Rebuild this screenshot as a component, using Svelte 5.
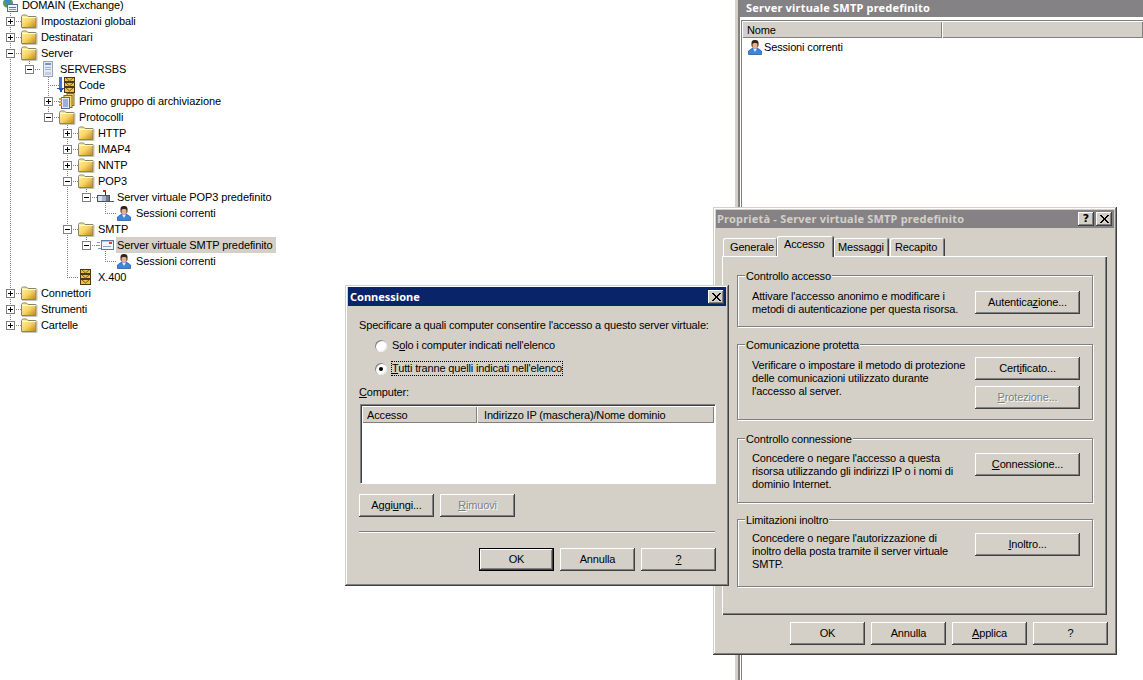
<script>
  const rows = [
    { t: 'DOMAIN (Exchange)', l: 0, i: 'domain' },
    { t: 'Impostazioni globali', l: 1, b: '+', i: 'folder' },
    { t: 'Destinatari', l: 1, b: '+', i: 'folder' },
    { t: 'Server', l: 1, b: '-', i: 'folder' },
    { t: 'SERVERSBS', l: 2, b: '-', i: 'server' },
    { t: 'Code', l: 3, i: 'queue' },
    { t: 'Primo gruppo di archiviazione', l: 3, b: '+', i: 'store' },
    { t: 'Protocolli', l: 3, b: '-', i: 'folder' },
    { t: 'HTTP', l: 4, b: '+', i: 'folder' },
    { t: 'IMAP4', l: 4, b: '+', i: 'folder' },
    { t: 'NNTP', l: 4, b: '+', i: 'folder' },
    { t: 'POP3', l: 4, b: '-', i: 'folder' },
    { t: 'Server virtuale POP3 predefinito', l: 5, b: '-', i: 'mailbox' },
    { t: 'Sessioni correnti', l: 6, i: 'person' },
    { t: 'SMTP', l: 4, b: '-', i: 'folder' },
    { t: 'Server virtuale SMTP predefinito', l: 5, b: '-', i: 'smtp', sel: true },
    { t: 'Sessioni correnti', l: 6, i: 'person' },
    { t: 'X.400', l: 4, i: 'stack' },
    { t: 'Connettori', l: 1, b: '+', i: 'folder' },
    { t: 'Strumenti', l: 1, b: '+', i: 'folder' },
    { t: 'Cartelle', l: 1, b: '+', i: 'folder' }
  ];
  const rowY = (i) => 5 + 16 * i;
  const boxX = (l) => 10 + 19 * (l - 1);

  const hLines = [];
  const vLines = [];
  rows.forEach((r, i) => {
    if (r.l === 0) return;
    const x = boxX(r.l);
    hLines.push({ x1: x, x2: x + 11, y: rowY(i) });
    let p = i - 1;
    while (rows[p].l >= r.l) p--;
    const next = rows.slice(i + 1).findIndex((n) => n.l <= r.l);
    const hasSibling = next >= 0 && rows[i + 1 + next].l === r.l;
    if (!hasSibling) vLines.push({ x, y1: rowY(p) + 6, y2: rowY(i) });
  });

  const groups = [
    { cls: 'g1', title: 'Controllo accesso',
      lines: ["Attivare l'accesso anonimo e modificare i", 'metodi di autenticazione per questa risorsa.'],
      btns: [{ pre: 'Autentica', u: 'z', post: 'ione...' }] },
    { cls: 'g2', title: 'Comunicazione protetta',
      lines: ['Verificare o impostare il metodo di protezione', 'delle comunicazioni utilizzato durante', "l'accesso al server."],
      btns: [{ pre: 'Cert', u: 'i', post: 'ficato...' }, { pre: '', u: 'P', post: 'rotezione...', off: true }] },
    { cls: 'g3', title: 'Controllo connessione',
      lines: ["Concedere o negare l'accesso a questa", 'risorsa utilizzando gli indirizzi IP o i nomi di', 'dominio Internet.'],
      btns: [{ pre: '', u: 'C', post: 'onnessione...' }] },
    { cls: 'g4', title: 'Limitazioni inoltro',
      lines: ["Concedere o negare l'autorizzazione di", 'inoltro della posta tramite il server virtuale', 'SMTP.'],
      btns: [{ pre: '', u: 'I', post: 'noltro...' }] }
  ];
  const tabs = [
    { t: 'Generale', cls: 't1' },
    { t: 'Accesso', cls: 't2 on' },
    { t: 'Messaggi', cls: 't3' },
    { t: 'Recapito', cls: 't4' }
  ];
</script>

{#snippet closeGlyph()}
  <svg width="9" height="8" viewBox="0 0 9 8" shape-rendering="crispEdges">
    <path d="M0 0h2v1h1v1h1v1h1V2h1V1h1V0h2v1H8v1H7v1H6v2h1v1h1v1h1v1H7V7H6V6H5V5H4v1H3v1H2v1H0V7h1V6h1V5h1V3H2V2H1V1H0z" fill="#000"/>
  </svg>
{/snippet}

{#snippet person()}
  <svg class="ic" width="16" height="16" viewBox="0 0 16 16">
    <path d="M1.500 15.500v-3.500l3.500-2.500h6l3.500 2.500v3.500z" fill="#3f84d8" stroke="#1d4f9c" stroke-width=".7"/>
    <path d="M6 9.500h4l-2 3.500z" fill="#eef4fc"/>
    <rect x="4.500" y="1" width="7" height="8" rx="3" fill="#33241a"/>
    <rect x="5.500" y="4" width="5" height="5" rx="1.500" fill="#e8b088"/>
  </svg>
{/snippet}

{#snippet folder()}
  <svg class="ic" width="16" height="16" viewBox="0 0 16 16">
    <defs>
      <linearGradient id="fg" x1="0" y1="0" x2="1" y2="1">
        <stop offset="0" stop-color="#fff2b8"/>
        <stop offset=".5" stop-color="#f8d468"/>
        <stop offset="1" stop-color="#c08410"/>
      </linearGradient>
    </defs>
    <path d="M.5 14.500V3.500l1-1.500h4l1.500 1.500h8v11z" fill="url(#fg)" stroke="#8c8468" stroke-width="1"/>
    <path d="M1 4.500h14" stroke="#fff8dc" stroke-width="1"/>
    <path d="M1 15.500h15V4" fill="none" stroke="#a8a08c" stroke-width="1" opacity=".6"/>
  </svg>
{/snippet}

{#snippet icon(name)}
  {#if name === 'folder'}
    {@render folder()}
  {:else if name === 'person'}
    {@render person()}
  {:else if name === 'domain'}
    <svg class="ic" width="16" height="16" viewBox="0 0 16 16">
      <circle cx="6" cy="6" r="5" fill="#4aa05c"/>
      <path d="M2.500 3h5v3h-3zM8 5l2 2-3 2z" fill="#3f84d8"/>
      <rect x="5.500" y="7.500" width="10" height="7" fill="#eef2fa" stroke="#5a6a90"/>
      <rect x="7" y="10" width="7" height="1" fill="#d84830"/>
      <path d="M7 12.500h7" stroke="#8a98b8"/>
    </svg>
  {:else if name === 'server'}
    <svg class="ic" width="16" height="16" viewBox="0 0 16 16" shape-rendering="crispEdges">
      <rect x="3.500" y="0.500" width="9" height="15" fill="#e4eaf4" stroke="#9aa4b8"/>
      <rect x="5" y="2" width="6" height="2" fill="#7a94c8"/>
      <rect x="5" y="6" width="6" height="1" fill="#a4b0c8"/>
      <rect x="5" y="8" width="6" height="1" fill="#a4b0c8"/>
      <rect x="5" y="11" width="6" height="3" fill="#c4cee0"/>
    </svg>
  {:else if name === 'queue'}
    <svg class="ic" width="16" height="16" viewBox="0 0 16 16" shape-rendering="crispEdges">
      <rect x="0" y="0" width="3" height="11" fill="#3f78d8"/>
      <path d="M-2 11h7v1H4v1H3v2H1v-2H0v-1h-2z" fill="#2458b8"/>
      <rect x="5.500" y="0.500" width="10" height="4" fill="#e8c050" stroke="#4a3a14"/>
      <rect x="5.500" y="5.500" width="10" height="4" fill="#e8c050" stroke="#4a3a14"/>
      <rect x="5.500" y="10.500" width="10" height="5" fill="#e8c050" stroke="#4a3a14"/>
      <path d="M7 1l3.500 3 3.500-3M7 6l3.500 3 3.500-3M7 11l3.500 3 3.500-3" fill="none" stroke="#7a5c18" shape-rendering="auto"/>
    </svg>
  {:else if name === 'store'}
    <svg class="ic" width="16" height="16" viewBox="0 0 16 16">
      <rect x="8" y="0.500" width="7" height="12" fill="#f0cf70" stroke="#8a6a20"/>
      <rect x="5" y="2.500" width="8" height="12" fill="#f4d884" stroke="#8a6a20"/>
      <rect x="2.500" y="4.500" width="8" height="11" fill="#dfe8f6" stroke="#5a6a90"/>
      <path d="M4 7h5M4 9h5M4 11h5M4 13h5" stroke="#5a78b8"/>
      <path d="M0 6h3M0 9h3M0 12h3" stroke="#d89a18" stroke-width="2"/>
    </svg>
  {:else if name === 'mailbox'}
    <svg class="ic wide" width="18" height="16" viewBox="0 0 18 16" shape-rendering="crispEdges">
      <rect x="8" y="2" width="1" height="6" fill="#8a1010"/>
      <rect x="6" y="1" width="3" height="2" fill="#e02020"/>
      <rect x="0.500" y="6.500" width="12" height="6" fill="#a8b4c8" stroke="#4a5468"/>
      <rect x="1" y="7" width="4" height="5" fill="#dde4ee"/>
      <rect x="9" y="7" width="3" height="5" fill="#6a7890"/>
      <rect x="8" y="12" width="2" height="1" fill="#4a5468"/>
      <rect x="13" y="12" width="4" height="1" fill="#4a5a80"/>
    </svg>
  {:else if name === 'smtp'}
    <svg class="ic" width="16" height="16" viewBox="0 0 16 16" shape-rendering="crispEdges">
      <rect x="4.500" y="3.500" width="12" height="9" fill="#f2f6fc" stroke="#5a78a8"/>
      <rect x="5" y="4" width="11" height="1" fill="#b8c8e0"/>
      <rect x="12" y="5" width="3" height="2" fill="#d84830"/>
      <rect x="6" y="9" width="8" height="1" fill="#8aa0c8"/>
      <path d="M0 5h3M0 8h3M1 11h3" stroke="#7a98c8"/>
    </svg>
  {:else if name === 'stack'}
    <svg class="ic" width="16" height="16" viewBox="0 0 16 16" shape-rendering="crispEdges">
      <rect x="2.500" y="0.500" width="10" height="4" fill="#e8c050" stroke="#4a3a14"/>
      <rect x="2.500" y="5.500" width="10" height="4" fill="#e8c050" stroke="#4a3a14"/>
      <rect x="2.500" y="10.500" width="10" height="5" fill="#e8c050" stroke="#4a3a14"/>
      <path d="M4 1l3.500 3 3.500-3M4 6l3.500 3 3.500-3M4 11l3.500 3 3.500-3" fill="none" stroke="#7a5c18" shape-rendering="auto"/>
    </svg>
  {/if}
{/snippet}

<div class="desk">
  <section class="tree">
    <svg class="wires" width="300" height="340" shape-rendering="crispEdges">
      {#each hLines as w}
        <line x1={w.x1} x2={w.x2} y1={w.y + 0.5} y2={w.y + 0.5} />
      {/each}
      {#each vLines as w}
        <line x1={w.x + 0.5} x2={w.x + 0.5} y1={w.y1} y2={w.y2} />
      {/each}
    </svg>
    <ul>
      {#each rows as r}
        <li class="row" style:padding-left="{2 + 19 * r.l}px">
          {#if r.b}
            <span class="box">
              <i class="h"></i>
              {#if r.b === '+'}<i class="v"></i>{/if}
            </span>
          {/if}
          {@render icon(r.i)}
          <span class="label" class:sel={r.sel}>{r.t}</span>
        </li>
      {/each}
    </ul>
  </section>

  <div class="splitter"></div>

  <section class="pane">
    <h2 class="banner">Server virtuale SMTP predefinito</h2>
    <div class="list">
      <div class="lhead">
        <span class="hcell first">Nome</span>
        <span class="hcell rest"></span>
      </div>
      <div class="litem">{@render person()}<span>Sessioni correnti</span></div>
    </div>
  </section>

  <div class="win props">
    <div class="title off">
      <span>Proprietà - Server virtuale SMTP predefinito</span>
      <div class="tools">
        <button class="tb q">?</button>
        <button class="tb">{@render closeGlyph()}</button>
      </div>
    </div>
    <div class="tabs">
      {#each tabs as tab}
        <span class="tab {tab.cls}">{tab.t}</span>
      {/each}
    </div>
    <div class="page">
      {#each groups as g}
        <div class="group {g.cls}">
          <span class="legend">{g.title}</span>
          <div class="gtext">
            {#each g.lines as line}<p>{line}</p>{/each}
          </div>
          <div class="gbtns">
            {#each g.btns as b}
              <button class="btn wide" class:off={b.off}>{b.pre}<u>{b.u}</u>{b.post}</button>
            {/each}
          </div>
        </div>
      {/each}
    </div>
    <div class="actions">
      <button class="btn">OK</button>
      <button class="btn">Annulla</button>
      <button class="btn"><u>A</u>pplica</button>
      <button class="btn">?</button>
    </div>
  </div>

  <div class="win conn">
    <div class="title">
      <span>Connessione</span>
      <div class="tools">
        <button class="tb">{@render closeGlyph()}</button>
      </div>
    </div>
    <div class="cbody">
      <p class="lead">Specificare a quali computer consentire l'accesso a questo server virtuale:</p>
      <div class="radio r1"><span class="dot"></span><span class="rl">S<u>o</u>lo i computer indicati nell'elenco</span></div>
      <div class="radio r2"><span class="dot on"></span><span class="rl focus"><u>T</u>utti tranne quelli indicati nell'elenco</span></div>
      <p class="clabel"><u>C</u>omputer:</p>
      <div class="clist">
        <div class="chead">
          <span class="hcell c1">Accesso</span>
          <span class="hcell c2">Indirizzo IP (maschera)/Nome dominio</span>
        </div>
      </div>
      <div class="crow">
        <button class="btn">Aggi<u>u</u>ngi...</button>
        <button class="btn off"><u>R</u>imuovi</button>
      </div>
      <div class="rule"></div>
      <div class="cfoot">
        <button class="btn def">OK</button>
        <button class="btn">Annulla</button>
        <button class="btn"><u>?</u></button>
      </div>
    </div>
  </div>
</div>

<style>
  :global(body) {
    margin: 0;
    background: #fff;
  }
  .desk {
    position: relative;
    display: flex;
    width: 1143px;
    height: 680px;
    overflow: hidden;
    font: 11px/13px "Liberation Sans", Arial, sans-serif;
    letter-spacing: -0.15px;
    color: #000;
  }
  p, h2, ul { margin: 0; padding: 0; }
  u { text-decoration-thickness: 1px; text-underline-offset: 1px; }

  /* tree */
  .tree {
    position: relative;
    width: 735px;
    flex: none;
  }
  .wires {
    position: absolute;
    left: 0;
    top: 0;
  }
  .wires line {
    stroke: #808080;
    stroke-width: 1;
    stroke-dasharray: 1 1;
  }
  ul {
    list-style: none;
    margin-top: -3px;
    position: relative;
  }
  .row {
    position: relative;
    display: flex;
    align-items: center;
    height: 16px;
  }
  .ic { flex: none; display: block; overflow: visible; }
  .ic.wide { margin-right: -2px; }
  .label {
    margin-left: 3px;
    padding: 0 1px;
    height: 16px;
    line-height: 17px;
    letter-spacing: -0.1px;
    white-space: nowrap;
  }
  .label.sel {
    background: #d4d0c8;
    padding-right: 3px;
  }
  .box {
    position: absolute;
    width: 9px;
    height: 9px;
    margin-left: -15px;
    top: 4px;
    box-sizing: border-box;
    border: 1px solid #808080;
    background: #fff;
  }
  .box i {
    position: absolute;
    background: #000;
  }
  .box .h { left: 1px; top: 3px; width: 5px; height: 1px; }
  .box .v { left: 3px; top: 1px; width: 1px; height: 5px; }

  /* splitter and right pane */
  .splitter {
    flex: none;
    width: 5px;
    background: #d4d0c8;
    box-shadow: inset -2px 0 #808080;
  }
  .pane {
    flex: 1;
    min-width: 0;
    display: flex;
    flex-direction: column;
  }
  .banner {
    flex: none;
    height: 17px;
    padding-left: 6px;
    background: #848284;
    color: #fff;
    font: bold 11px/15px "Noto Sans", sans-serif;
    letter-spacing: 0.2px;
  }
  .list {
    flex: 1;
    margin: 3px 0 0 1px;
    border-top: 1px solid #808080;
    border-left: 1px solid #808080;
  }
  .lhead {
    display: flex;
    height: 17px;
  }
  .hcell {
    box-sizing: border-box;
    background: #d4d0c8;
    box-shadow: inset 1px 1px #fff, inset -1px -1px #808080;
    line-height: 18px;
    padding-left: 5px;
    white-space: nowrap;
  }
  .first { width: 200px; }
  .rest { flex: 1; }
  .litem {
    display: flex;
    align-items: center;
    height: 16px;
    margin-top: 1px;
    padding-left: 5px;
    gap: 1px;
  }

  /* windows */
  .win {
    position: absolute;
    box-sizing: border-box;
    background: #d4d0c8;
    padding: 3px;
    box-shadow: inset -1px -1px #404040, inset 1px 1px #d4d0c8, inset -2px -2px #808080, inset 2px 2px #fff;
  }
  .props { left: 713px; top: 207px; width: 404px; height: 448px; }
  .conn { left: 345px; top: 285px; width: 384px; height: 301px; }
  .title {
    display: flex;
    align-items: center;
    justify-content: space-between;
    height: 18px;
    padding: 0 2px;
    background: #0a246a;
    color: #fff;
    font: bold 11px/18px "Noto Sans", sans-serif;
    letter-spacing: 0;
    white-space: nowrap;
  }
  .conn .title { height: 19px; margin-top: -1px; }
  .title.off {
    background: #848284;
    color: #d4d0c8;
    padding-left: 1px;
    letter-spacing: 0.2px;
  }
  .tools { display: flex; gap: 2px; }
  .tb {
    display: flex;
    align-items: center;
    justify-content: center;
    width: 16px;
    height: 14px;
    padding: 0;
    border: 0;
    background: #d4d0c8;
    box-shadow: inset -1px -1px #404040, inset 1px 1px #fff, inset -2px -2px #808080;
    font: bold 11px/14px "DejaVu Sans", sans-serif;
    color: #000;
  }
  .btn {
    flex: none;
    box-sizing: border-box;
    width: 75px;
    height: 23px;
    padding: 0;
    border: 0;
    background: #d4d0c8;
    box-shadow: inset -1px -1px #404040, inset 1px 1px #fff, inset -2px -2px #808080;
    font: inherit;
    letter-spacing: inherit;
    color: #000;
    text-align: center;
  }
  .btn.wide { width: 105px; }
  .btn.off {
    color: #808080;
    text-shadow: 1px 1px 0 #fff;
  }
  .btn.def {
    box-shadow: inset 0 0 0 1px #000, inset -2px -2px #404040, inset 2px 2px #fff, inset -3px -3px #808080;
  }

  /* tabs */
  .tabs {
    display: flex;
    align-items: flex-end;
    height: 28px;
    margin-left: 7px;
    position: relative;
    z-index: 1;
  }
  .tab {
    box-sizing: border-box;
    height: 18px;
    padding-left: 7px;
    line-height: 19px;
    background: #d4d0c8;
    border-radius: 2px 2px 0 0;
    box-shadow: inset 1px 1px #fff, inset -1px 0 #808080, 1px 0 #404040;
  }
  .t1 { width: 54px; }
  .t3 { width: 54px; margin-left: 1px; padding-left: 4px; }
  .t4 { width: 54px; margin-left: 2px; padding-left: 5px; }
  .tab.on {
    width: 56px;
    height: 21px;
    margin-bottom: -1px;
    margin-left: 0;
    padding-left: 7px;
    line-height: 17px;
    background: #d4d0c8;
  }
  .page {
    box-sizing: border-box;
    margin-left: 6px;
    width: 385px;
    height: 359px;
    padding: 19px 14px 0 15px;
    box-shadow: inset 1px 1px #fff, inset -1px -1px #404040, inset -2px -2px #808080;
  }
  .group {
    position: relative;
    box-sizing: border-box;
    display: flex;
    justify-content: space-between;
    width: 356px;
    padding: 0 12px 0 14px;
    border: 1px solid #808080;
    box-shadow: 1px 1px #fff, inset 1px 1px #fff;
  }
  .legend {
    position: absolute;
    left: 7px;
    top: -6px;
    padding: 0 1px;
    background: #d4d0c8;
    line-height: 13px;
  }
  .gtext { white-space: nowrap; }
  .gbtns { display: flex; flex-direction: column; gap: 6px; }
  .g1 { height: 52px; padding-top: 15px; }
  .g1 .gtext { margin-top: -1px; }
  .g2 { height: 76px; margin-top: 17px; padding-top: 12px; }
  .g2 .gtext { margin-top: 2px; }
  .g3 { height: 65px; margin-top: 18px; padding-top: 14px; }
  .g3 .gtext { margin-top: -1px; }
  .g4 { height: 68px; margin-top: 16px; padding-top: 13px; }
  .g4 .gtext { margin-top: -1px; }
  .actions {
    display: flex;
    justify-content: flex-end;
    gap: 6px;
    margin-top: 7px;
    padding-right: 6px;
  }

  /* connection dialog */
  .cbody { padding: 13px 10px 0 11px; }
  .lead { white-space: nowrap; }
  .radio {
    display: flex;
    align-items: center;
    height: 15px;
    margin-left: 16px;
    white-space: nowrap;
  }
  .r1 { margin-top: 6px; }
  .r2 { margin-top: 8px; }
  .dot {
    position: relative;
    flex: none;
    width: 12px;
    height: 12px;
    margin-right: 4px;
    border-radius: 50%;
    background: #fff;
    box-shadow: inset 1px 1px #808080, inset -1px -1px #eeeae2;
  }
  .dot.on::after {
    content: "";
    position: absolute;
    left: 4px;
    top: 4px;
    width: 4px;
    height: 4px;
    border-radius: 50%;
    background: #000;
  }
  .rl { padding: 1px; line-height: 13px; }
  .rl.focus { outline: 1px dotted #000; outline-offset: -1px; }
  .clabel { margin-top: 10px; }
  .clist {
    box-sizing: border-box;
    height: 79px;
    width: 355px;
    margin: 5px 0 0 1px;
    background: #fff;
    border-top: 1px solid #808080;
    border-left: 1px solid #808080;
    box-shadow: inset 1px 1px #404040, 1px 1px #fff;
  }
  .chead {
    display: flex;
    height: 17px;
    padding: 1px 0 0 1px;
  }
  .c1 { width: 115px; }
  .c2 { flex: 1; margin-right: 1px; padding-left: 7px; }
  .crow { display: flex; gap: 6px; margin-top: 11px; }
  .rule {
    width: 356px;
    margin-top: 14px;
    height: 1px;
    background: #808080;
    box-shadow: 0 1px #fff;
  }
  .cfoot {
    display: flex;
    justify-content: flex-end;
    gap: 6px;
    margin: 16px 0 0 0;
    width: 357px;
  }
</style>
